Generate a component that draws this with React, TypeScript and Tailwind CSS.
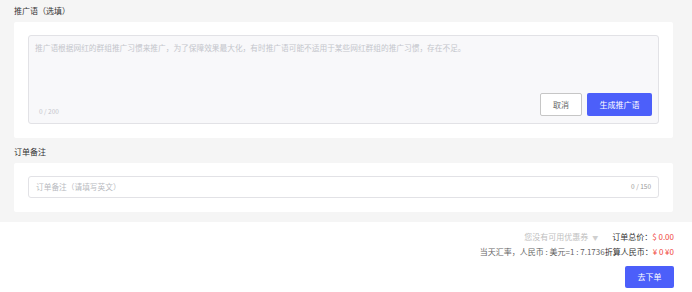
import React from 'react';

const font = { fontFamily: '"Noto Sans CJK SC", "Noto Sans", sans-serif' };

function PromoSection() {
  return (
    <>
      <div className="h-[22px] flex items-center text-[8px] text-[#333]">推广语（选填）</div>
      <div className="bg-white rounded-[2px] px-[14px] pt-[13px] pb-[14px]">
        <div className="h-[89px] flex flex-col bg-[#f8f8fa] border border-[#e2e2e6] rounded-[3px] pl-[6px] pr-[6px] pt-[6px] pb-[7px]">
          <div className="text-[7.7px] leading-[12px] text-[#c4c6cc]">
            推广语根据网红的群组推广习惯来推广，为了保障效果最大化，有时推广语可能不适用于某些网红群组的推广习惯，存在不足。
          </div>
          <div className="flex-1 flex items-end justify-between">
            <span className="pl-[4px] text-[6.5px] leading-[10px] text-[#c4c6cc]">0 / 200</span>
            <div className="flex gap-[5px]">
              <button className="w-[42px] h-[23px] bg-white border border-[#c6c6c6] rounded-[2px] text-[8px] text-[#666]">取消</button>
              <button className="w-[65px] h-[23px] bg-[#4c5ffa] rounded-[2px] text-[8px] text-white">生成推广语</button>
            </div>
          </div>
        </div>
      </div>
    </>
  );
}

function RemarkSection() {
  return (
    <>
      <div className="h-[25px] pt-[3px] flex items-center text-[8px] text-[#333]">订单备注</div>
      <div className="bg-white rounded-[2px] px-[14px] pt-[13px] pb-[14px]">
        <div className="h-[22px] flex items-center justify-between bg-white border border-[#e2e2e6] rounded-[3px] px-[7px]">
          <span className="text-[7.7px] text-[#b8bac0]">订单备注（请填写英文）</span>
          <span className="text-[6.5px] text-[#9a9a9a]">0 / 150</span>
        </div>
      </div>
    </>
  );
}

export default function App() {
  return (
    <div className="w-[692px] h-[292px] flex flex-col bg-white" style={font}>
      <div className="h-[222px] bg-[#f5f5f5] pl-[14px] pr-[19px]">
        <PromoSection />
        <RemarkSection />
      </div>
      <div className="flex-1 flex flex-col items-end pr-[18px] pt-[8px]">
        <div className="h-[14px] flex items-center text-[8px]">
          <span className="text-[#c0c0c0]">您没有可用优惠券</span>
          <span className="ml-[4px] text-[6px] text-[#cfcfcf]">▼</span>
          <span className="ml-[14px] text-[#333]">订单总价：</span>
          <span className="text-[#f0483e]">$ 0.00</span>
        </div>
        <div className="h-[16px] flex items-center text-[8px]">
          <span className="text-[#666]">当天汇率，人民币 : 美元=1 : 7.1736</span>
          <span className="text-[#333]">折算人民币：</span>
          <span className="text-[#f0483e]">¥ 0 ¥0</span>
        </div>
        <button className="mt-[6px] w-[49px] h-[22px] bg-[#4c5ffa] rounded-[2px] text-[8px] text-white">去下单</button>
      </div>
    </div>
  );
}
